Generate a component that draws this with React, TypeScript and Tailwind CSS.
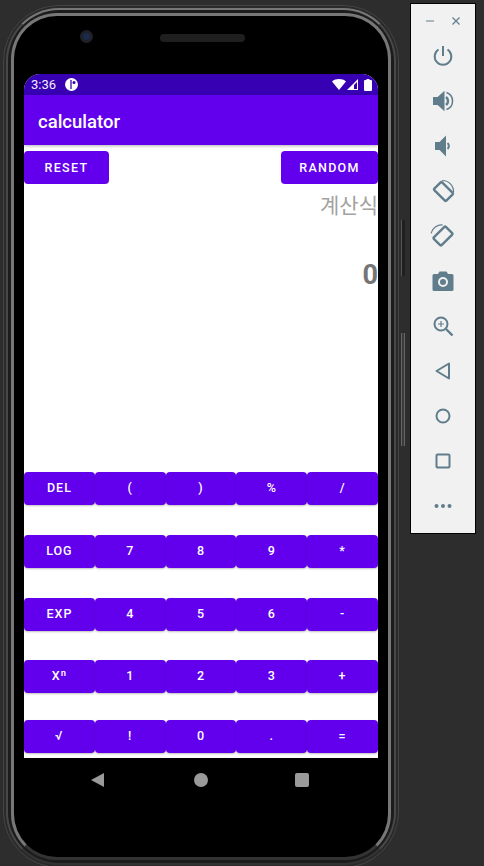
import React from 'react';

const keypad = [
  ['DEL', '(', ')', '%', '/'],
  ['LOG', '7', '8', '9', '*'],
  ['EXP', '4', '5', '6', '-'],
  ['Xⁿ', '1', '2', '3', '+'],
  ['√', '!', '0', '.', '='],
];

// gap above each keypad row, the rows are not evenly spaced on the device
const rowClass = ['', 'mt-[30px]', 'mt-[30px]', 'mt-[29px]', 'mt-[27px]'];

function ToolIcon({ children }: { children: React.ReactNode }) {
  return (
    <div className="h-[45px] flex items-center justify-center">
      <svg width="24" height="24" viewBox="0 0 24 24" fill="none" stroke="#607d8b" strokeWidth="2" overflow="visible">
        {children}
      </svg>
    </div>
  );
}

function ToolPanel() {
  return (
    <aside className="mt-[3px] ml-[3px] w-[66px] h-[531px] bg-[#f1f1f1] border border-black flex flex-col">
      <div className="h-[24px] mt-[5px] flex items-center justify-between px-[14px]">
        <svg width="10" height="10" viewBox="0 0 10 10" stroke="#78909c" strokeWidth="1.2">
          <path d="M1 5h8" />
        </svg>
        <svg width="10" height="10" viewBox="0 0 10 10" stroke="#607d8b" strokeWidth="1.2">
          <path d="M1.5 1.5l7 7M8.5 1.5l-7 7" />
        </svg>
      </div>
      <div className="flex flex-col">
        <ToolIcon>
          <path d="M12 2v10" />
          <path d="M7.5 5.5a8.3 8.3 0 1 0 9 0" />
        </ToolIcon>
        <ToolIcon>
          <path d="M3 9h4l5.5-5v16L7 15H3z" fill="#607d8b" />
          <path d="M15 8a5 5 0 0 1 0 8" strokeWidth="2.5" />
          <path d="M15.5 3.5a9 9 0 0 1 0 17" strokeWidth="1.5" />
        </ToolIcon>
        <ToolIcon>
          <path d="M5 9h4l5-5v16l-5-5H5z" fill="#607d8b" />
          <path d="M16.5 9a4 4 0 0 1 0 6" strokeWidth="2" />
        </ToolIcon>
        <ToolIcon>
          <rect x="4" y="7" width="17" height="11" rx="1" transform="rotate(45 12.5 12.5)" strokeWidth="2.4" />
          <path d="M11.2 1.5A11 11 0 0 1 22.5 13.2" strokeWidth="1.2" />
        </ToolIcon>
        <ToolIcon>
          <rect x="3.5" y="6.5" width="17" height="11" rx="1" transform="rotate(-45 12 12)" strokeWidth="2.4" />
          <path d="M0 9.3A11 11 0 0 1 11.7 1" strokeWidth="1.2" />
        </ToolIcon>
        <ToolIcon>
          <path
            d="M8.5 2.5h7L17 5h4a1.5 1.5 0 0 1 1.5 1.5v14A1.5 1.5 0 0 1 21 22H3a1.5 1.5 0 0 1-1.5-1.5v-14A1.5 1.5 0 0 1 3 5h4z"
            fill="#607d8b"
            stroke="none"
          />
          <circle cx="12" cy="13" r="4" stroke="#f1f1f1" strokeWidth="2" />
        </ToolIcon>
        <ToolIcon>
          <circle cx="10" cy="10" r="6.5" />
          <path d="M15 15l6.5 6.5" strokeWidth="2.4" />
          <path d="M10 7v6M7 10h6" strokeWidth="1.2" />
        </ToolIcon>
        <ToolIcon>
          <path d="M18 4.5v15L5.5 12z" strokeLinejoin="round" />
        </ToolIcon>
        <ToolIcon>
          <circle cx="12" cy="12" r="6.5" />
        </ToolIcon>
        <ToolIcon>
          <rect x="5.5" y="5.5" width="13" height="13" rx="1" />
        </ToolIcon>
        <ToolIcon>
          <g fill="#607d8b" stroke="none">
            <circle cx="5.5" cy="12" r="2" />
            <circle cx="12" cy="12" r="2" />
            <circle cx="18.5" cy="12" r="2" />
          </g>
        </ToolIcon>
      </div>
    </aside>
  );
}

function StatusBar() {
  return (
    <div className="h-[21px] bg-[#3700b3] flex items-center justify-between pl-[7px] pr-[6px] text-white">
      <div className="flex items-center gap-[9px]">
        <span className="text-[13px] font-normal leading-none text-[#f3eefc]">3:36</span>
        <svg width="13" height="13" viewBox="0 0 13 13">
          <circle cx="6.5" cy="6.5" r="6.5" fill="#fff" />
          <path d="M6 2v9" stroke="#3700b3" strokeWidth="1.3" />
          <circle cx="9" cy="4.5" r="1.5" fill="#3700b3" />
        </svg>
      </div>
      <div className="flex items-center gap-[1px]">
        <svg width="14" height="11" viewBox="0 0 14 11">
          <path d="M0 2.4C3.8-.8 10.2-.8 14 2.4L7 11z" fill="#fff" />
        </svg>
        <svg width="11" height="11" viewBox="0 0 11 11">
          <path d="M11 0v11H0z" fill="#fff" />
          <path d="M10 3v7H7V6z" fill="#3700b3" />
        </svg>
        <svg width="8" height="12" viewBox="0 0 8 12" className="ml-[5px]">
          <path d="M2.5 0h3v1H7a1 1 0 0 1 1 1v9a1 1 0 0 1-1 1H1a1 1 0 0 1-1-1V2a1 1 0 0 1 1-1h1.5z" fill="#fff" />
        </svg>
      </div>
    </div>
  );
}

function Key({ label }: { label: string }) {
  return (
    <button className="h-[33px] rounded-[4px] bg-[#6200ee] text-white text-[12.5px] font-medium tracking-[1px] shadow-[0_1px_2px_rgba(0,0,0,0.25)] flex items-center justify-center">
      {label}
    </button>
  );
}

function CalculatorScreen() {
  return (
    <div className="w-[354px] h-[684px] shrink-0 bg-white rounded-t-[16px] overflow-hidden flex flex-col font-['Roboto',sans-serif]">
      <StatusBar />
      <div className="h-[50px] bg-[#6200ee] flex items-center pl-[14px] pt-[4px] shadow-[0_1px_3px_rgba(0,0,0,0.3)]">
        <span className="text-white text-[18.5px] font-medium leading-none">calculator</span>
      </div>
      <div className="flex justify-between mt-[6px]">
        <button className="w-[85px] h-[33px] pt-[1px] rounded-[4px] bg-[#6200ee] text-white text-[12.5px] font-medium tracking-[1.3px] flex items-center justify-center">
          RESET
        </button>
        <button className="w-[97px] h-[33px] pt-[1px] rounded-[4px] bg-[#6200ee] text-white text-[12.5px] font-medium tracking-[1.3px] flex items-center justify-center">
          RANDOM
        </button>
      </div>
      <div className="text-right text-[21px] leading-[28px] mt-[8px] text-[#a3a3a3] font-['Roboto','Noto_Sans_CJK_KR',sans-serif]">
        계산식
      </div>
      <div className="text-right text-[27px] font-bold leading-[32px] mt-[39px] text-[#757575]">0</div>
      <div className="mt-[181px] flex flex-col">
        {keypad.map((row, i) => (
          <div key={i} className={`grid grid-cols-5 ${rowClass[i]}`}>
            {row.map((label) => (
              <Key key={label} label={label} />
            ))}
          </div>
        ))}
      </div>
    </div>
  );
}

function Phone() {
  return (
    <div className="ml-[3px] mt-[5px] w-[396px] h-[863px] shrink-0 rounded-[56px] bg-[#2a2a2a] border border-[#444] p-[2px]">
      <div className="w-full h-full rounded-[53px] bg-[#1c1c1c] border-2 border-[#484848] border-t-[#777] border-b-[#333] p-[3px]">
        <div className="w-full h-full rounded-[46px] bg-black border-[3px] border-[#777] border-b-[#333] flex flex-col items-center">
          <div className="h-[58px] w-full shrink-0 flex items-start pt-[14px] pl-[66px]">
            <div className="w-[13px] h-[13px] rounded-full bg-[#1b2a4a] border-[3px] border-[#1e2128]" />
            <div className="w-[85px] h-[8px] mt-[4px] ml-[67px] rounded-full bg-[#1f1f1f]" />
          </div>
          <CalculatorScreen />
          <div className="w-[354px] shrink-0 flex items-center mt-[15px] h-[14px] pl-[67px]">
            <svg width="14" height="14" viewBox="0 0 14 14">
              <path d="M13 0v14L0 7z" fill="#9a9a9a" />
            </svg>
            <div className="w-[14px] h-[14px] ml-[89px] rounded-full bg-[#9a9a9a]" />
            <div className="w-[14px] h-[14px] ml-[87px] rounded-[2px] bg-[#9a9a9a]" />
          </div>
        </div>
      </div>
    </div>
  );
}

function SideButtons() {
  return (
    <div className="w-[6px] ml-[2px] mt-[220px] flex flex-col shrink-0">
      <div className="w-[4px] h-[56px] bg-[#1f1f1f] border-l border-[#555]" />
      <div className="w-[4px] h-[113px] mt-[57px] bg-[#3a3a3a] border-x border-[#666]" />
    </div>
  );
}

export default function App() {
  return (
    <div className="w-[484px] h-[866px] bg-[#2d2d2d] overflow-hidden flex items-start font-['Roboto',sans-serif]">
      <Phone />
      <SideButtons />
      <ToolPanel />
    </div>
  );
}
